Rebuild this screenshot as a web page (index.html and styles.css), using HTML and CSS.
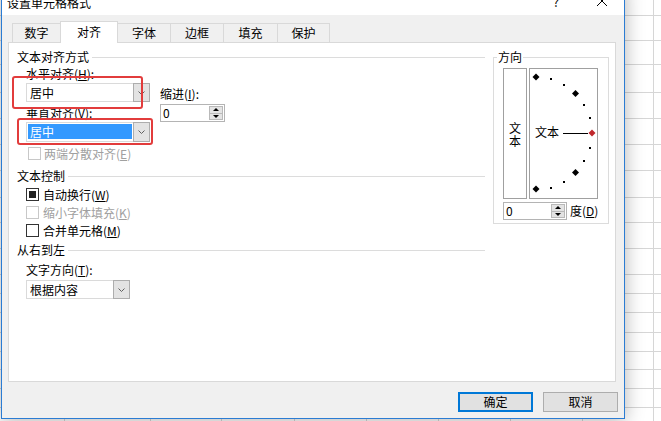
FILE: index.html
```html
<!DOCTYPE html>
<html lang="zh-CN">
<head>
  <meta charset="UTF-8" />
  <title>设置单元格格式</title>
  <link rel="stylesheet" href="styles.css">
</head>
<body>
  <div class="dialog">
    <div class="titlebar">
      <span class="title">设置单元格格式</span>
      <span class="tb-btn help">?</span>
      <span class="tb-btn close">
        <svg width="10" height="10" viewBox="0 0 10 10"><path d="M0 0L10 10M10 0L0 10" stroke="#000" stroke-width="1"/></svg>
      </span>
    </div>

    <div class="dlg-body">
      <div class="tabs">
        <div class="tab t1">数字</div>
        <div class="tab t2 active">对齐</div>
        <div class="tab t3">字体</div>
        <div class="tab t4">边框</div>
        <div class="tab t5">填充</div>
        <div class="tab t6">保护</div>
      </div>

      <div class="panel">
        <div class="left-col">
          <div class="group-title">文本对齐方式</div>
          <div class="align-row">
            <div class="align-col">
              <div class="lbl">水平对齐(<u>H</u>):</div>
              <div class="combo combo-h">
                <span class="field">居中</span>
                <span class="arrow"><svg width="7" height="4" viewBox="0 0 7 4"><polyline points="0.5,0.5 3.5,3.5 6.5,0.5" fill="none" stroke="#606060"/></svg></span>
              </div>
              <div class="lbl lbl-v">垂直对齐(<u>V</u>):</div>
              <div class="combo combo-v">
                <span class="field"><span class="selected">居中</span></span>
                <span class="arrow"><svg width="7" height="4" viewBox="0 0 7 4"><polyline points="0.5,0.5 3.5,3.5 6.5,0.5" fill="none" stroke="#606060"/></svg></span>
              </div>
              <div class="check disabled justify"><span class="box"></span>两端分散对齐(<u>E</u>)</div>
            </div>
            <div class="indent-col">
              <div class="lbl">缩进(<u>I</u>):</div>
              <div class="spin indent-spin">
                <span class="val">0</span>
                <span class="spinner"><span class="up"></span><span class="down"></span></span>
              </div>
            </div>
          </div>

          <div class="group-title gt-control">文本控制</div>
          <div class="checks">
            <div class="check checked"><span class="box"></span>自动换行(<u>W</u>)</div>
            <div class="check disabled"><span class="box"></span>缩小字体填充(<u>K</u>)</div>
            <div class="check"><span class="box"></span>合并单元格(<u>M</u>)</div>
          </div>

          <div class="group-title gt-rtl">从右到左</div>
          <div class="sub">
            <div class="lbl lbl-dir">文字方向(<u>T</u>):</div>
            <div class="combo combo-dir">
              <span class="field">根据内容</span>
              <span class="arrow"><svg width="7" height="4" viewBox="0 0 7 4"><polyline points="0.5,0.5 3.5,3.5 6.5,0.5" fill="none" stroke="#606060"/></svg></span>
            </div>
          </div>
        </div>

        <div class="orient">
          <div class="legend">方向</div>
          <div class="dial-row">
            <div class="vert-text"><span>文</span><span>本</span></div>
            <div class="dial">
              <svg width="67" height="129" viewBox="0 0 67 129">
                <g fill="#000">
                  <polygon points="6,4.5 9.5,8 6,11.5 2.5,8"/>
                  <polygon points="45.5,21 49,24.5 45.5,28 42,24.5"/>
                  <polygon points="45.5,100 49,103.5 45.5,107 42,103.5"/>
                  <polygon points="6,116.5 9.5,120 6,123.5 2.5,120"/>
                  <rect x="20" y="9" width="2" height="2"/>
                  <rect x="33" y="15" width="2" height="2"/>
                  <rect x="53" y="35" width="2" height="2"/>
                  <rect x="59" y="48" width="2" height="2"/>
                  <rect x="59" y="78" width="2" height="2"/>
                  <rect x="53" y="91" width="2" height="2"/>
                  <rect x="33" y="112" width="2" height="2"/>
                  <rect x="20" y="118" width="2" height="2"/>
                </g>
                <polygon points="62,60.5 65.5,64 62,67.5 58.5,64" fill="#c0282d"/>
                <text x="5" y="68" font-size="12">文本</text>
                <line x1="33" y1="64.5" x2="58" y2="64.5" stroke="#000" stroke-width="1"/>
              </svg>
            </div>
          </div>
          <div class="deg-row">
            <div class="spin deg-spin">
              <span class="val">0</span>
              <span class="spinner"><span class="up"></span><span class="down"></span></span>
            </div>
            <span class="deg-lbl">度(<u>D</u>)</span>
          </div>
        </div>

        <!-- red annotation boxes drawn on the screenshot -->
        <div class="mark mark-h"></div>
        <div class="mark mark-v"></div>
      </div>

      <div class="footer">
        <button class="btn btn-ok">确定</button>
        <button class="btn">取消</button>
      </div>
    </div>
  </div>
</body>
</html>
```

FILE: styles.css
```css
html, body {
  height: 100%;
}

body {
  margin: 0;
  overflow: hidden;
  font-family: "Noto Sans CJK SC", "Microsoft YaHei", sans-serif;
  font-size: 12px;
  color: #000;
  background-color: #fff;
  /* spreadsheet grid behind the dialog */
  background-image:
    linear-gradient(to right,
      transparent 0 64px, #d6d6d6 64px 65px,
      transparent 65px 150px, #d6d6d6 150px 151px,
      transparent 151px 221px, #d6d6d6 221px 222px,
      transparent 222px 294px, #d6d6d6 294px 295px,
      transparent 295px 366px, #d6d6d6 366px 367px,
      transparent 367px 438px, #d6d6d6 438px 439px,
      transparent 439px 510px, #d6d6d6 510px 511px,
      transparent 511px 582px, #d6d6d6 582px 583px,
      transparent 583px 653px, #d6d6d6 653px 654px,
      transparent 654px),
    linear-gradient(to bottom,
      transparent 0 15px, #d6d6d6 15px 16px,
      transparent 16px 40px, #d6d6d6 40px 41px,
      transparent 41px 64px, #d6d6d6 64px 65px,
      transparent 65px 92px, #d6d6d6 92px 93px,
      transparent 93px 118px, #d6d6d6 118px 119px,
      transparent 119px 144px, #d6d6d6 144px 145px,
      transparent 145px 170px, #d6d6d6 170px 171px,
      transparent 171px 197px, #d6d6d6 197px 198px,
      transparent 198px 222px, #d6d6d6 222px 223px,
      transparent 223px 248px, #d6d6d6 248px 249px,
      transparent 249px 274px, #d6d6d6 274px 275px,
      transparent 275px 293px, #d6d6d6 293px 294px,
      transparent 294px 312px, #d6d6d6 312px 313px,
      transparent 313px 332px, #d6d6d6 332px 333px,
      transparent 333px 351px, #d6d6d6 351px 352px,
      transparent 352px 369px, #d6d6d6 369px 370px,
      transparent 370px 388px, #d6d6d6 388px 389px,
      transparent 389px 407px, #d6d6d6 407px 408px,
      transparent 408px);
}

u {
  text-decoration: underline;
  text-underline-offset: 1px;
}

/* window */
.dialog {
  position: absolute;
  left: 1px;
  top: -15px;
  width: 624px;
  height: 434px;
  box-sizing: border-box;
  border: 1px solid #2b7cd3;
  background: #f0f0f0;
  box-shadow: 0 2px 18px rgba(0, 0, 0, 0.3);
  display: flex;
  flex-direction: column;
}

.titlebar {
  height: 29px;
  background: #fff;
  display: flex;
  align-items: center;
  flex-shrink: 0;
}

.title {
  padding-left: 5px;
  line-height: 16px;
  margin-top: 4px;
  flex: 1;
}

.tb-btn {
  display: flex;
  justify-content: center;
  align-items: center;
}

.help {
  width: 46px;
  font-size: 13px;
  line-height: 16px;
  margin-top: 2px;
}

.close {
  width: 45px;
}

.dlg-body {
  flex: 1;
  padding: 6px 0 6px 0;
}

/* tabs */
.tabs {
  display: flex;
  align-items: flex-end;
  height: 21px;
  margin-left: 10px;
}

.tab {
  box-sizing: border-box;
  height: 19px;
  border: 1px solid #d9d9d9;
  border-bottom: none;
  background: #f0f0f0;
  text-align: center;
  line-height: 14px;
  padding-top: 2px;
  margin-left: -1px;
}

.tab:first-child {
  margin-left: 0;
}

.tab.active {
  height: 22px;
  margin-bottom: -1px;
  padding-top: 3px;
  background: #fff;
  position: relative;
  z-index: 1;
}

.t1 { width: 49px; }
.t2 { width: 58px; }
.t3 { width: 54px; }
.t4 { width: 54px; }
.t5 { width: 55px; }
.t6 { width: 53px; }

/* page */
.panel {
  box-sizing: border-box;
  height: 340px;
  margin: 0 8px 0 6px;
  border: 1px solid #d9d9d9;
  background: #fff;
  padding: 7px 6px 0 8px;
  display: flex;
  align-items: flex-start;
  position: relative;
}

.left-col {
  width: 468px;
}

.group-title {
  display: flex;
  align-items: center;
  line-height: 14px;
  height: 14px;
}

.group-title::after {
  content: "";
  flex: 1;
  height: 1px;
  background: #dcdcdc;
  margin-left: 3px;
}

.gt-control {
  margin-top: 9px;
}

.gt-rtl {
  margin-top: 6px;
}

.lbl {
  line-height: 14px;
  height: 14px;
}

.align-row {
  display: flex;
  margin-top: 3px;
}

.align-col {
  padding-left: 9px;
}

.lbl-v {
  margin-top: 4px;
}

.indent-col {
  margin-left: 10px;
  padding-top: 20px;
}

/* combo boxes */
.combo {
  box-sizing: border-box;
  display: flex;
  width: 124px;
  height: 20px;
  margin-top: 2px;
  border: 1px solid #dadada;
  background: #fff;
}

.combo-h {
  height: 19px;
}

.combo .field {
  flex: 1;
  padding-left: 3px;
  line-height: 17px;
}

.combo .arrow {
  box-sizing: border-box;
  width: 17px;
  margin: -1px -1px -1px 0;
  border: 1px solid #adadad;
  background: #e3e3e3;
  display: flex;
  justify-content: center;
  align-items: center;
}

.combo-v .field {
  padding: 1px 1px 2px 1px;
}

.combo-v .selected {
  display: block;
  height: 15px;
  line-height: 15px;
  padding-left: 2px;
  background: #3399ff;
  color: #fff;
}

.sub {
  padding-left: 9px;
}

.lbl-dir {
  margin-top: 6px;
}

.combo-dir {
  width: 104px;
  height: 19px;
  margin-top: 3px;
}

/* checkboxes */
.check {
  display: flex;
  align-items: center;
  height: 13px;
  line-height: 13px;
}

.check .box {
  box-sizing: border-box;
  width: 13px;
  height: 13px;
  border: 1px solid #333;
  background: #fff;
  margin-right: 4px;
  display: flex;
  justify-content: center;
  align-items: center;
}

.check.checked .box::after {
  content: "";
  width: 7px;
  height: 7px;
  background: #222;
}

.check.disabled {
  color: #a0a0a0;
}

.check.disabled .box {
  border-color: #c8c8c8;
}

.justify {
  margin-top: 5px;
  margin-left: 2px;
}

.justify .box {
  margin-right: 3px;
}

.checks {
  padding-left: 9px;
  margin-top: 5px;
  display: flex;
  flex-direction: column;
  gap: 5px;
}

/* spin boxes */
.spin {
  box-sizing: border-box;
  display: flex;
  height: 18px;
  border: 1px solid #b4b4b4;
  background: #fff;
}

.spin .val {
  flex: 1;
  padding-left: 2px;
  line-height: 16px;
}

.spinner {
  width: 14px;
  margin: 1px;
  display: flex;
  flex-direction: column;
}

.spinner span {
  flex: 1;
  background: #e3e3e3;
  border: 1px solid #b9b9b9;
  display: flex;
  justify-content: center;
  align-items: center;
}

.spinner .down {
  border-top: none;
}

.spinner .up::after {
  content: "";
  border-left: 3px solid transparent;
  border-right: 3px solid transparent;
  border-bottom: 3px solid #000;
}

.spinner .down::after {
  content: "";
  border-left: 3px solid transparent;
  border-right: 3px solid transparent;
  border-top: 3px solid #000;
}

.indent-spin {
  width: 65px;
  margin-top: 3px;
}

/* orientation group */
.orient {
  box-sizing: border-box;
  width: 116px;
  margin: 7px 0 0 8px;
  border: 1px solid #dcdcdc;
  padding: 0 10px 3px 9px;
  display: flex;
  flex-direction: column;
  align-items: flex-start;
}

.legend {
  margin: -8px 0 0 -6px;
  padding: 0 1px;
  background: #fff;
  line-height: 14px;
}

.dial-row {
  display: flex;
  gap: 2px;
  height: 131px;
  margin-top: 4px;
}

.vert-text {
  box-sizing: border-box;
  width: 24px;
  border: 1px solid #a0a0a0;
  display: flex;
  flex-direction: column;
  justify-content: center;
  align-items: center;
  line-height: 13px;
}

.dial {
  box-sizing: border-box;
  width: 69px;
  border: 1px solid #a0a0a0;
}

.dial svg {
  display: block;
}

.deg-row {
  display: flex;
  align-items: center;
  margin-top: 3px;
  white-space: nowrap;
  width: 100px;
}

.deg-spin {
  width: 64px;
  flex-shrink: 0;
}

.deg-lbl {
  margin-left: 3px;
  line-height: 14px;
  flex-shrink: 0;
}

/* red annotation boxes */
.mark {
  position: absolute;
  box-sizing: border-box;
  border: 2px solid #e23c3c;
  border-radius: 3px;
}

.mark-h {
  left: 3px;
  top: 33px;
  width: 131px;
  height: 33px;
}

.mark-v {
  left: 8px;
  top: 75px;
  width: 136px;
  height: 27px;
}

/* buttons */
.footer {
  display: flex;
  justify-content: flex-end;
  gap: 10px;
  margin-top: 10px;
  padding-right: 6px;
}

.btn {
  box-sizing: border-box;
  width: 75px;
  height: 20px;
  padding: 0;
  border: 1px solid #adadad;
  background: #e1e1e1;
  font-family: inherit;
  font-size: 12px;
  line-height: 16px;
  color: #000;
}

.btn-ok {
  border: 2px solid #0078d7;
}
```
